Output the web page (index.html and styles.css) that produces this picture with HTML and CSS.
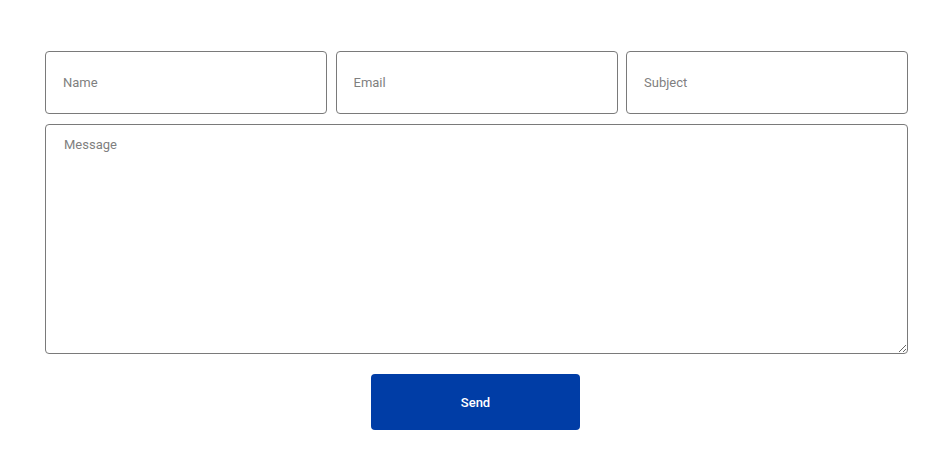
FILE: index.html
```html
<!DOCTYPE html>
<html>
<head>
<meta charset="utf-8">
<link rel="stylesheet" href="styles.css">
</head>
<body>
<form class="contact">
  <div class="row">
    <input class="field" type="text" placeholder="Name">
    <input class="field" type="email" placeholder="Email">
    <input class="field" type="text" placeholder="Subject">
  </div>
  <textarea class="message" placeholder="Message"></textarea>
  <div class="actions">
    <button class="send" type="button">Send</button>
  </div>
</form>
</body>
</html>
```

FILE: styles.css
```css
html, body {
  margin: 0;
  padding: 0;
  background: #fff;
}
body {
  font-family: Roboto, "Liberation Sans", Arial, sans-serif;
}
.contact {
  width: 863px;
  margin: 51px 0 0 45px;
  display: flex;
  flex-direction: column;
}
.row {
  display: grid;
  grid-template-columns: 282px 282px 282px;
  column-gap: 8.5px;
}
.field, .message {
  box-sizing: border-box;
  border: 1px solid #7a7a7a;
  border-radius: 4px;
  font-family: Roboto, "Liberation Sans", Arial, sans-serif;
  font-size: 13px;
  color: #333;
  background: #fff;
  outline: none;
}
.field {
  height: 63px;
  padding: 0 17px;
  width: 100%;
}
.field::placeholder, .message::placeholder {
  color: #7f7f7f;
}
.message {
  margin-top: 10px;
  height: 230px;
  width: 100%;
  padding: 12px 18px;
  resize: vertical;
  display: block;
}
.actions {
  margin-top: 20px;
  display: flex;
  justify-content: center;
}
.send {
  width: 209px;
  height: 56px;
  margin-right: 2px;
  border: none;
  border-radius: 4px;
  background: #003da6;
  color: #fff;
  font-family: Roboto, "Liberation Sans", Arial, sans-serif;
  font-size: 13px;
  font-weight: 500;
  cursor: pointer;
}
```
